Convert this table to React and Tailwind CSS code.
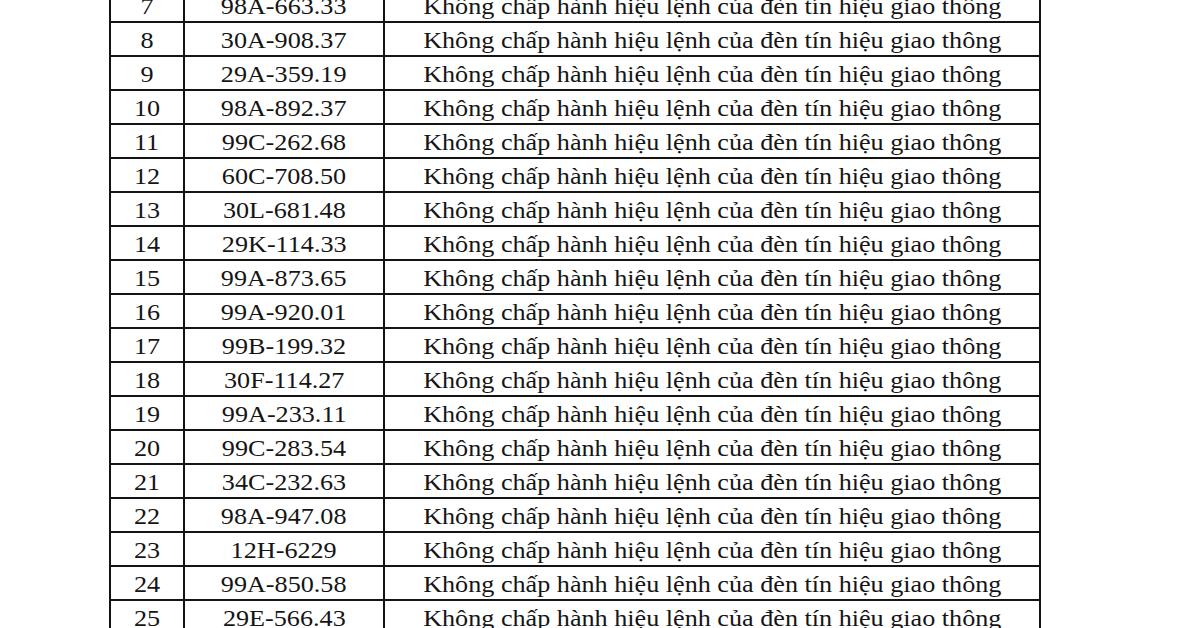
const rows = [
  [7, "98A-663.33"],
  [8, "30A-908.37"],
  [9, "29A-359.19"],
  [10, "98A-892.37"],
  [11, "99C-262.68"],
  [12, "60C-708.50"],
  [13, "30L-681.48"],
  [14, "29K-114.33"],
  [15, "99A-873.65"],
  [16, "99A-920.01"],
  [17, "99B-199.32"],
  [18, "30F-114.27"],
  [19, "99A-233.11"],
  [20, "99C-283.54"],
  [21, "34C-232.63"],
  [22, "98A-947.08"],
  [23, "12H-6229"],
  [24, "99A-850.58"],
  [25, "29E-566.43"],
];

const violation = "Không chấp hành hiệu lệnh của đèn tín hiệu giao thông";

function Cell({ width, children }) {
  return (
    <td className={`${width} border-2 border-[#141414] p-0 pt-[2px] text-center whitespace-nowrap`}>
      <span className="inline-block scale-x-[1.09]">{children}</span>
    </td>
  );
}

export default function App() {
  return (
    <div className="w-[1200px] h-[628px] overflow-hidden bg-white">
      <table
        className="ml-[109px] mt-[-13px] border-collapse text-[#151515] text-[24px] leading-none"
        style={{ fontFamily: '"Liberation Serif", "Times New Roman", serif' }}
      >
        <tbody>
          {rows.map(([no, plate]) => (
            <tr key={no} className="h-[34px]">
              <Cell width="w-[74px]">{no}</Cell>
              <Cell width="w-[200px]">{plate}</Cell>
              <Cell width="w-[656px]">{violation}</Cell>
            </tr>
          ))}
        </tbody>
      </table>
    </div>
  );
}
